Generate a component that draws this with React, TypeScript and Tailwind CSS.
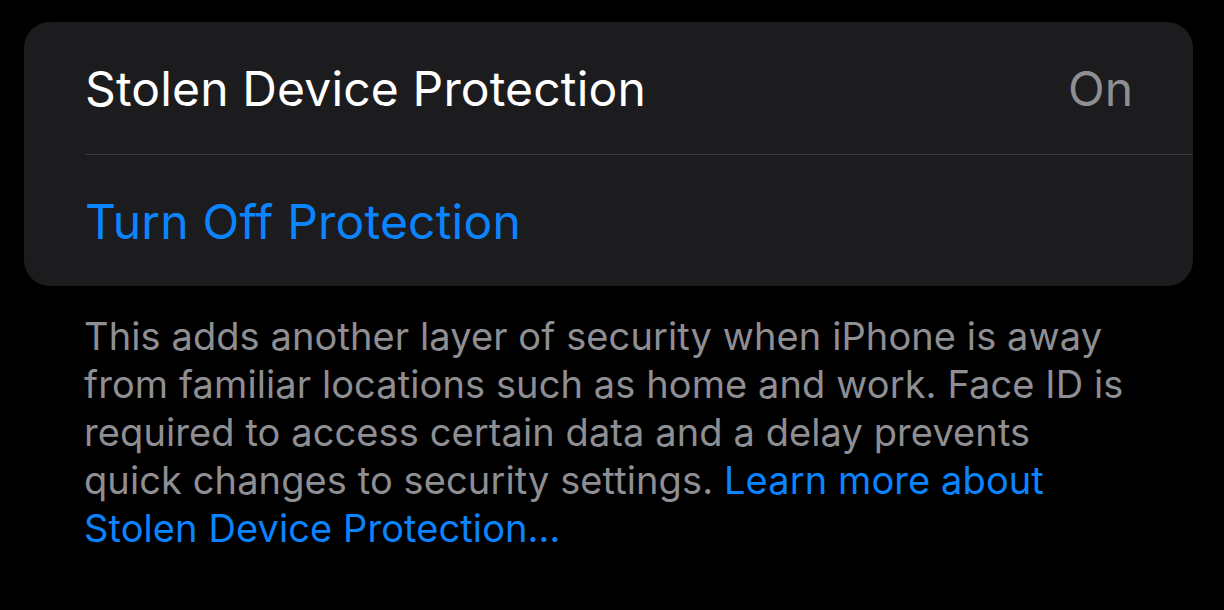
export default function App() {
  return (
    <div className="w-[1224px] h-[610px] bg-black overflow-hidden pt-[22px]" style={{ fontFamily: 'Inter, "Noto Sans", sans-serif' }}>
      <div className="ml-[24px] w-[1169px] h-[264px] rounded-[26px] bg-[#1c1c1e] flex flex-col">
        <div className="h-[132px] flex items-center justify-between pl-[61px] pr-[60px] pt-[2px]">
          <span className="text-[48px] leading-none text-white tracking-[0.15px]">Stolen Device Protection</span>
          <span className="text-[48px] leading-none text-[#8e8e93]">On</span>
        </div>
        <div className="ml-[61px] h-px bg-[#3a3a3c]" />
        <div className="h-[131px] flex items-center pl-[61px] pt-[2px]">
          <span className="text-[48px] leading-none text-[#0a84ff] tracking-[0.2px]">Turn Off Protection</span>
        </div>
      </div>
      <p className="ml-[84px] mt-[26px] text-[38px] leading-[48px] text-[#8e8e93] tracking-[0.1px]">
        This adds another layer of security when iPhone is away<br />
        from familiar locations such as home and work. Face ID is<br />
        required to access certain data and a delay prevents<br />
        quick changes to security settings. <span className="text-[#0a84ff]">Learn more about<br />
        Stolen Device Protection…</span>
      </p>
    </div>
  );
}
